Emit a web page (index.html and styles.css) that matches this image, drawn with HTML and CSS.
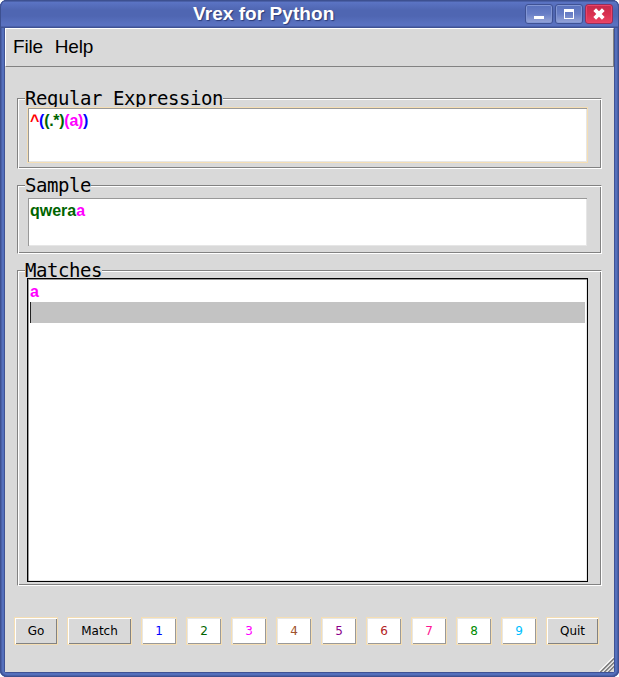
FILE: index.html
```html
<!DOCTYPE html>
<html lang="en">
<head>
<meta charset="utf-8">
<title>Vrex for Python</title>
<link rel="stylesheet" href="styles.css">
</head>
<body>
<div class="window">
  <header class="titlebar">
    <h1 class="title">Vrex for Python</h1>
    <div class="controls">
      <span class="control"><svg width="26" height="18" viewBox="0 0 26 18"><path fill="#fff" d="M8 11h10v3H8z"/></svg></span>
      <span class="control"><svg width="26" height="18" viewBox="0 0 26 18"><path fill="#fff" fill-rule="evenodd" d="M8 4h10v10H8zM9 7v6h8V7z"/></svg></span>
      <span class="control close"><svg width="26" height="18" viewBox="0 0 26 18"><path stroke="#fff" stroke-width="3.8" d="M8.7 4.7l8.6 8.6M17.3 4.7l-8.6 8.6"/></svg></span>
    </div>
  </header>
  <main class="client">
    <nav class="menubar"><span>File</span><span>Help</span></nav>
    <section class="group regex">
      <h2 class="legend">Regular Expression</h2>
      <div class="text hot"><span class="red">^</span><span class="c1">(</span><span class="c2">(.*)</span><span class="c3">(a)</span><span class="c1">)</span></div>
    </section>
    <section class="group sample">
      <h2 class="legend">Sample</h2>
      <div class="text"><span class="c2">qwera</span><span class="c3">a</span></div>
    </section>
    <section class="group matches">
      <h2 class="legend">Matches</h2>
      <div class="text focus"><div class="line c3">a</div><div class="line current"></div></div>
    </section>
    <div class="buttons">
      <button class="btn go">Go</button>
      <button class="btn match">Match</button>
      <button class="btn num c1">1</button>
      <button class="btn num c2">2</button>
      <button class="btn num c3">3</button>
      <button class="btn num c4">4</button>
      <button class="btn num c5">5</button>
      <button class="btn num c6">6</button>
      <button class="btn num c7">7</button>
      <button class="btn num c8">8</button>
      <button class="btn num c9">9</button>
      <button class="btn quit">Quit</button>
    </div>
    <svg class="grip" width="15" height="15" viewBox="0 0 15 15"><path stroke="#fff" stroke-width="1.2" d="M0 14.5L14.5 0M4 15.5L15.5 4M8 15.5L15.5 8"/><path stroke="#777" stroke-width="1.4" d="M1 15.5L15.5 1M5 15.5L15.5 5M9 15.5L15.5 9"/></svg>
  </main>
</div>
</body>
</html>
```
FILE: styles.css
```css
* { box-sizing: border-box; }
body { margin: 0; background: #fff; }
.window {
  width: 619px;
  height: 677px;
  padding: 0 5px 5px;
  border-radius: 7px;
  background: #5068b4;
  box-shadow: inset 0 0 0 1px #3d5090, inset 0 0 0 2px #4a60a8, inset 0 0 0 4px #5470bc, inset 0 0 0 5px #3f5294;
}
.titlebar {
  position: relative;
  display: flex;
  height: 28px;
  margin: 0 -5px;
  padding: 4px 6px 0;
  border-radius: 7px 7px 0 0;
  background: linear-gradient(#3d5090 0 1px, #4a60a8 1px 2px, #5b74c4 2px, #4f66b2 10px, #4f66b2 16px, #5971c0 24px, #5971c0 26px, #3f5294 27px);
  box-shadow: inset 1px 0 #3d5090, inset -1px 0 #3d5090;
}
.title {
  flex: 1;
  margin: 0 0 0 90px;
  padding-left: 97px;
  font: bold 19px/20px "Liberation Sans", Arial, sans-serif;
  letter-spacing: .06px;
  color: #fff;
  text-shadow: 1px 1px 1px #2c3c78;
  white-space: nowrap;
}
.controls { display: flex; gap: 2px; }
.control {
  width: 28px;
  height: 20px;
  border: 1px solid #3f5294;
  border-radius: 3px;
  background: linear-gradient(#5870bc, #687ec6 50%, #98a6d8);
  box-shadow: inset 0 0 0 1px #8296d4;
}
.control svg { display: block; }
.close {
  border-color: #92305c;
  background: linear-gradient(#c42c4c, #d83050 50%, #e84464);
  box-shadow: inset 0 0 0 1px #ec4468;
}
.client {
  position: relative;
  height: 644px;
  background: #d9d9d9;
}
.menubar {
  display: flex;
  gap: 12px;
  height: 39px;
  padding: 7px 7px 0;
  border: 1px solid;
  border-color: #fff #828282 #828282 #fff;
  font: 19px/22px "Liberation Sans", Arial, sans-serif;
  letter-spacing: -.2px;
}
.group {
  width: 585px;
  margin-left: 12px;
  padding-left: 9px;
  border: 1px solid;
  border-color: #828282 #fff #fff #828282;
  box-shadow: inset 1px 1px #fff, inset -1px -1px #828282;
}
.regex { height: 71px; margin-top: 31px; }
.sample { height: 69px; margin-top: 16px; }
.matches { height: 316px; margin-top: 16px; }
.legend {
  width: max-content;
  height: 20px;
  margin: -11px 0 -1px -2px;
  background: #d9d9d9;
  font: 19px/20px "DejaVu Sans Mono", monospace;
  letter-spacing: -.438px;
}
.matches .legend { margin-bottom: -2px; }
.text {
  position: relative;
  width: 561px;
  padding: 2px;
  border: 1px solid #d9d9d9;
  background: #fff;
  box-shadow: inset 1px 1px #999, inset -1px -1px #e6e6e6;
  font: bold 16px/21px "Liberation Sans", Arial, sans-serif;
}
.regex .text { height: 56px; letter-spacing: -.28px; }
.sample .text { height: 50px; margin-top: 3px; }
.matches .text { height: 304px; }
.hot { border-color: #f5deb3; }
.focus { border-color: #000; }
.line { height: 21px; }
.current { background: #c3c3c3; border-left: 1px solid #222; }
.buttons {
  display: flex;
  gap: 9px;
  margin: 31px 0 0 9px;
}
.btn {
  height: 28px;
  padding: 0;
  border: 1px solid #f5deb3;
  background: #d9d9d9;
  box-shadow: inset 1px 1px #fff, inset -1px -1px #828282;
  font: 12px/24px "DejaVu Sans", sans-serif;
  color: #000;
}
.go { width: 44px; }
.match { width: 65px; }
.quit { width: 53px; }
.num { width: 36px; background: #fff; box-shadow: inset 1px 1px #e6e6e6, inset -1px -1px #999; }
.red { color: #f00; }
.c1 { color: #00f; }
.c2 { color: #006400; }
.c3 { color: #f0f; }
.c4 { color: #a0522d; }
.c5 { color: #8b008b; }
.c6 { color: #b22222; }
.c7 { color: #ff1493; }
.c8 { color: #008b00; }
.c9 { color: #00bfff; }
.grip { position: absolute; right: 0; bottom: 0; }
```
